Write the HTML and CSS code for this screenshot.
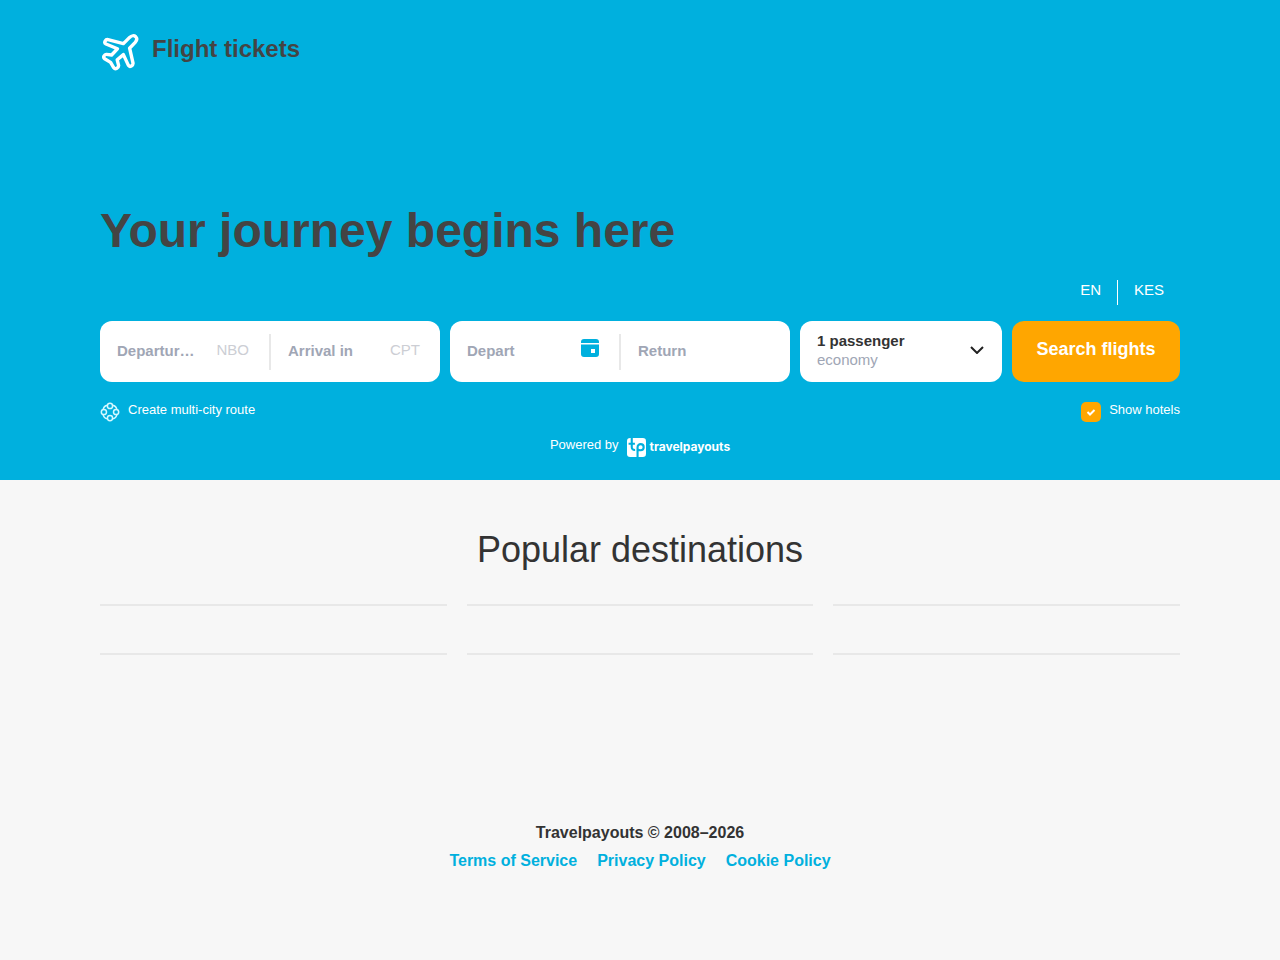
FILE: index.html
```html
<!DOCTYPE html>
<html lang="en">

<head>
    <meta charset="UTF-8">
    <meta name="viewport" content="width=device-width, initial-scale=1.0">
    <title>Flight tickets</title>
    <link rel="stylesheet" href="styles.css">
</head>

<body>
    <header class="hero">
        <div class="container">
            <a class="logo" href="#">
                <svg class="logo-icon" viewBox="0 0 40 40" fill="none" stroke="#fff" stroke-width="3.4" stroke-linejoin="round">
                    <path d="M23.4 11.6L29.6 5.4C31.6 3.5 34.2 3.4 35.6 4.6C37.2 6.2 36.8 8.6 35.2 10.4L29.6 16.2L33 31C33.4 33.4 29.8 35.6 28.4 33.4L23.4 22.6L17.2 27.8L18.6 33.4C18.8 35.6 15.4 37.8 13.8 35.8L10.6 30.4L4.6 26.8C2.6 25.4 4.4 22.2 6.4 22.4L11.6 23L17.4 16.8L6 12C3.4 10.6 5.6 7.2 8 7.6Z"/>
                </svg>
                <span>Flight tickets</span>
            </a>
            <h1>Your journey begins here</h1>
            <nav class="settings">
                <button type="button">EN</button>
                <button type="button">KES</button>
            </nav>
            <form class="search" onsubmit="return false">
                <div class="search-row">
                    <div class="pair">
                        <label class="field">
                            <input type="text" name="origin" placeholder="Departure from" aria-label="Departure from">
                            <span class="code">NBO</span>
                        </label>
                        <label class="field">
                            <input type="text" name="destination" placeholder="Arrival in" aria-label="Arrival in">
                            <span class="code">CPT</span>
                        </label>
                    </div>
                    <div class="pair">
                        <label class="field">
                            <input type="text" name="depart" placeholder="Depart" aria-label="Depart">
                            <svg class="calendar" viewBox="0 0 18 18" fill="#00b0de">
                                <path d="M0 4V3a3 3 0 0 1 3-3h12a3 3 0 0 1 3 3v1z"/>
                                <path fill-rule="evenodd" d="M0 5.5h18V15a3 3 0 0 1-3 3H3a3 3 0 0 1-3-3zM10 10v4h4v-4z"/>
                            </svg>
                        </label>
                        <label class="field">
                            <input type="text" name="return" placeholder="Return" aria-label="Return">
                        </label>
                    </div>
                    <button type="button" class="passengers">
                        <span>
                            <strong>1 passenger</strong>
                            <span class="trip-class">economy</span>
                        </span>
                        <svg class="arrow" viewBox="0 0 14 8" fill="none" stroke="#212121" stroke-width="2">
                            <path d="M1 1l6 6 6-6"/>
                        </svg>
                    </button>
                    <button type="submit" class="submit">Search flights</button>
                </div>
                <div class="options">
                    <a class="multi" href="#">
                        <svg viewBox="0 0 20 20" fill="none" stroke="#d4f8ff" stroke-width="1.5">
                            <circle cx="10" cy="3.9" r="2.6"/>
                            <circle cx="16.1" cy="10" r="2.6"/>
                            <circle cx="10" cy="16.1" r="2.6"/>
                            <circle cx="3.9" cy="10" r="2.6"/>
                            <path d="M12.6 3.2q3.6.6 4.2 4.2M16.8 12.6q-.6 3.6-4.2 4.2M7.4 16.8q-3.6-.6-4.2-4.2M3.2 7.4q.6-3.6 4.2-4.2"/>
                        </svg>
                        <span>Create multi-city route</span>
                    </a>
                    <label class="hotels">
                        <input type="checkbox" name="hotels" checked>
                        <span>Show hotels</span>
                    </label>
                </div>
            </form>
            <a class="powered" href="#">
                <span>Powered by</span>
                <svg viewBox="0 0 18 18">
                    <path fill="#fff" d="M3 0h12a3 3 0 0 1 3 3v12a3 3 0 0 1-3 3H3a3 3 0 0 1-3-3V3a3 3 0 0 1 3-3z"/>
                    <path fill="none" stroke="#00b0de" stroke-width="2" d="M4.5 0v8.5q0 3 3.2 2.8M1.5 5.5h6M10 18V8.7a2.9 2.9 0 1 1 2.9 2.9q-2 0-2.9-1"/>
                </svg>
                <b>travelpayouts</b>
            </a>
        </div>
    </header>
    <main class="destinations container">
        <h2>Popular destinations</h2>
        <div class="grid">
            <div class="city"></div>
            <div class="city"></div>
            <div class="city"></div>
            <div class="city"></div>
            <div class="city"></div>
            <div class="city"></div>
        </div>
    </main>
    <footer>
        <p>Travelpayouts © 2008–2026</p>
        <nav class="links">
            <a href="#">Terms of Service</a>
            <a href="#">Privacy Policy</a>
            <a href="#">Cookie Policy</a>
        </nav>
    </footer>
</body>

</html>
```

FILE: styles.css
```css
* {
    box-sizing: border-box;
}

body {
    margin: 0;
    background-color: #f7f7f7;
    color: #333;
    font-family: "Liberation Sans", Arial, Helvetica, sans-serif;
}

button,
input {
    font-family: inherit;
}

button {
    border: none;
    cursor: pointer;
}

a {
    text-decoration: none;
}

.container {
    max-width: 1120px;
    margin: 0 auto;
    padding: 0 20px;
}

.hero {
    background-color: #00b0de;
    padding: 32px 0 23px;
}

.logo {
    display: flex;
    gap: 12px;
    color: #444;
    font-size: 24px;
    line-height: 34px;
    font-weight: bold;
}

.logo-icon {
    width: 40px;
    height: 40px;
}

h1 {
    margin: 129px 0 19px;
    color: #444;
    font-size: 48px;
    line-height: 60px;
}

.settings {
    display: flex;
    justify-content: flex-end;
    height: 25px;
    margin-bottom: 16px;
}

.settings button {
    padding: 0 16px 6px;
    background: none;
    color: white;
    font-size: 15px;
}

.settings button + button {
    border-left: 1px solid white;
}

.search-row {
    display: grid;
    grid-template-columns: minmax(0, 340fr) minmax(0, 340fr) minmax(0, 202fr) minmax(0, 168fr);
    gap: 10px;
}

.pair {
    display: flex;
    align-items: center;
    height: 61px;
    background-color: white;
    border-radius: 12px;
}

.field {
    display: flex;
    flex: 1;
    align-items: center;
    gap: 20px;
    min-width: 0;
    height: 36px;
    padding: 0 20px 3px 17px;
}

.field + .field {
    border-left: 2px solid #e8e8e8;
}

.field input {
    flex: 1;
    min-width: 0;
    padding: 0;
    border: none;
    outline: none;
    background: none;
    color: #212121;
    font-size: 15px;
    font-weight: bold;
    text-overflow: ellipsis;
}

.field input::placeholder {
    color: #a0a6b5;
}

.code {
    padding-bottom: 2px;
    color: #ccced4;
    font-size: 15px;
}

.calendar {
    width: 18px;
    height: 18px;
    margin-bottom: 4px;
}

.passengers {
    display: flex;
    align-items: center;
    justify-content: space-between;
    padding: 0 18px 4px 17px;
    border-radius: 12px;
    background-color: white;
    color: #333;
    font-size: 15px;
    line-height: 19px;
    text-align: left;
}

.passengers strong,
.trip-class {
    display: block;
}

.trip-class {
    color: #a0a6b5;
}

.arrow {
    width: 14px;
    height: 8px;
}

.submit {
    padding: 0 0 4px;
    border-radius: 12px;
    background-color: #ffa600;
    color: white;
    font-size: 18px;
    font-weight: bold;
}

.options {
    display: flex;
    justify-content: space-between;
    margin-top: 20px;
    font-size: 13px;
    line-height: 16px;
}

.multi,
.hotels {
    display: flex;
    gap: 8px;
    color: white;
}

.multi svg {
    width: 20px;
    height: 20px;
}

.hotels input {
    appearance: none;
    width: 20px;
    height: 20px;
    margin: 0;
    border-radius: 5px;
    background-color: white;
}

.hotels input:checked {
    background: #ffa600 url("data:image/svg+xml,%3Csvg xmlns='http://www.w3.org/2000/svg' viewBox='0 0 20 20'%3E%3Cpath d='M6.5 10l2.5 2.5 4.5-4.5' fill='none' stroke='white' stroke-width='2'/%3E%3C/svg%3E");
}

.powered {
    display: flex;
    justify-content: center;
    gap: 8px;
    margin-top: 15px;
    color: white;
    font-size: 13px;
    line-height: 16px;
}

.powered svg {
    width: 19px;
    height: 19px;
    margin-top: 1px;
}

.powered b {
    margin: 2px 0 0 -4px;
    font-family: Inter, "Noto Sans", sans-serif;
    font-size: 12px;
}

.destinations {
    padding-top: 48px;
}

h2 {
    margin: 0 0 32px;
    font-size: 36px;
    line-height: 44px;
    font-weight: normal;
    text-align: center;
}

.grid {
    display: grid;
    grid-template-columns: repeat(3, 1fr);
    gap: 0 20px;
}

.city {
    height: 49px;
    border-top: 2px solid #e8e8e8;
}

footer {
    padding: 117px 20px 84px;
    font-size: 16px;
    line-height: 28px;
    font-weight: bold;
    text-align: center;
}

footer p {
    margin: 0;
}

.links {
    display: flex;
    justify-content: center;
    gap: 20px;
}

.links a {
    color: #00b0de;
}

@media (max-width: 900px) {
    .search-row {
        grid-template-columns: 1fr;
    }

    .passengers,
    .submit {
        height: 61px;
    }
}
```
